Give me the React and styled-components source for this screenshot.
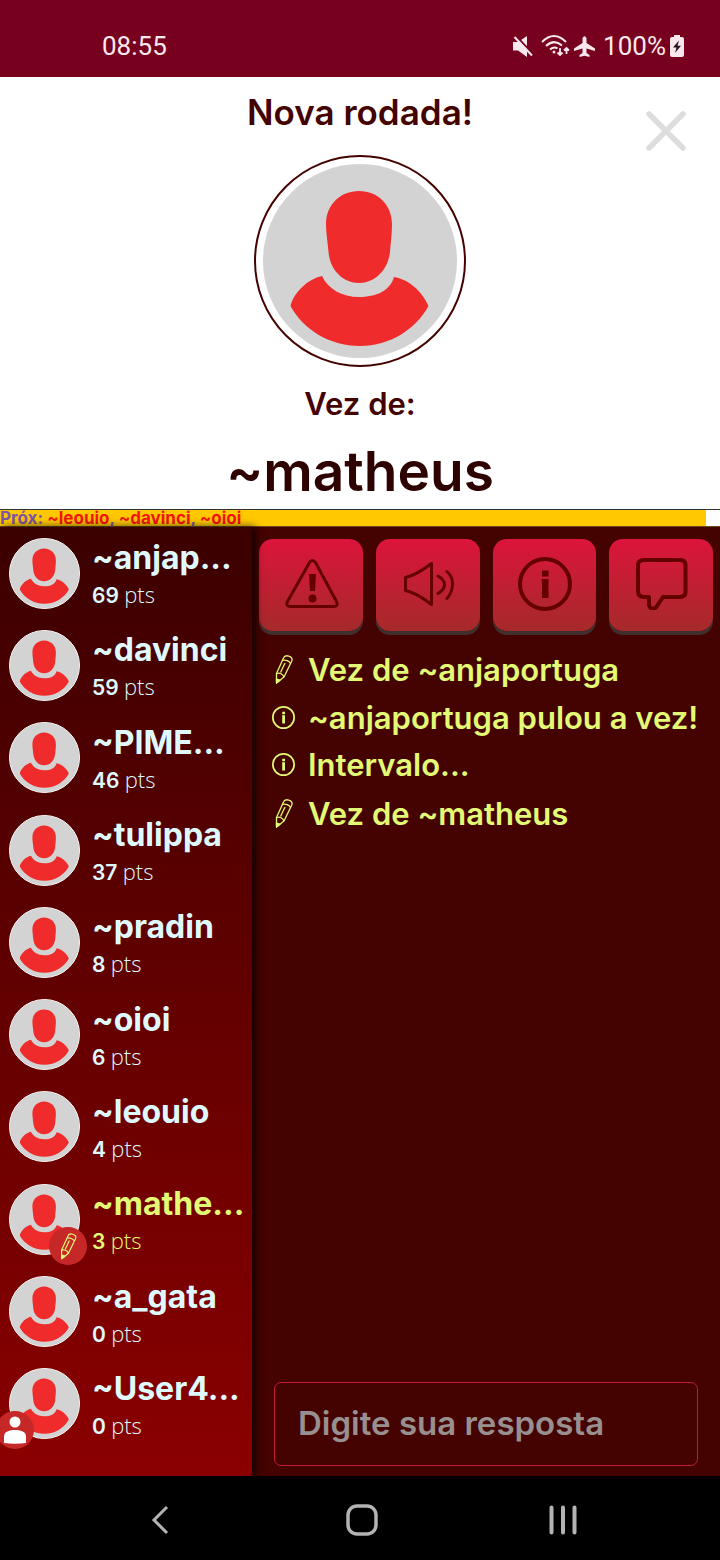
import React from 'react';
import styled, { createGlobalStyle } from 'styled-components';

const GlobalStyle = createGlobalStyle`
  * { box-sizing: border-box; }
  body { margin: 0; font-family: Inter, "Liberation Sans", sans-serif; font-weight: 600; background: #000; }
  ul, ol, h1, h2, p { margin: 0; padding: 0; list-style: none; font-weight: inherit; }
  button { border: 0; padding: 0; background: none; cursor: pointer; }
  svg { display: block; flex: none; }
`;

const Screen = styled.div`
  display: flex;
  flex-direction: column;
  min-height: 100vh;
`;

const StatusBar = styled.header`
  display: flex;
  justify-content: space-between;
  align-items: center;
  height: 77px;
  padding: 15px 36px 0 102px;
  background: #76001e;
  color: #f8e8ee;
  font: 400 26px/30px Roboto, sans-serif;
`;

const StatusIcons = styled.div`
  display: flex;
  align-items: center;
  gap: 4px;
`;

const TurnPanel = styled.section`
  position: relative;
  display: flex;
  flex-direction: column;
  align-items: center;
  height: 432px;
  padding-top: 13px;
  background: #fff;
  color: #440300;
`;

const Title = styled.h1`
  font-size: 35px;
  line-height: 44px;
`;

const TurnAvatar = styled.div`
  width: 212px;
  height: 212px;
  margin: 21px 0 17px;
  padding: 7px;
  border: 2px solid #440300;
  border-radius: 50%;
`;

const TurnLabel = styled.p`
  font-size: 31px;
  line-height: 40px;
`;

const TurnName = styled.h2`
  margin-top: 15px;
  color: #2e0200;
  font-size: 55px;
  line-height: 64px;
`;

const CloseButton = styled.button`
  position: absolute;
  top: 32px;
  right: 32px;
`;

const QueueBar = styled.div`
  display: flex;
  height: 18px;
  border-top: 1px solid #333;
  border-bottom: 1px solid #6b4a14;
  background: #fff;
`;

const QueueFill = styled.div`
  width: 98%;
  background: #ffc800;
  color: #7f55a5;
  font-size: 17px;
  font-weight: 700;
  line-height: 16px;
  white-space: nowrap;
`;

const QueueName = styled.span`
  color: #f5150c;
`;

const Game = styled.main`
  flex: 1;
  display: flex;
  background: #440300;
`;

const Sidebar = styled.aside`
  position: relative;
  width: 35%;
  padding-bottom: 26px;
  display: flex;
  background: linear-gradient(#3b0000, #8b0000);
  box-shadow: 3px 0 8px rgba(0, 0, 0, 0.8);
`;

const PlayerList = styled.ul`
  flex: 1;
  min-width: 0;
  display: grid;
  grid-auto-rows: 1fr;
`;

const Player = styled.li`
  display: flex;
  align-items: center;
  gap: 12px;
  padding-left: 9px;
  color: ${(p) => (p.$active ? '#e2fa74' : '#dffaff')};
`;

const PlayerAvatar = styled.div`
  position: relative;
  flex: none;
  width: 71px;
  height: 71px;
  border: 1px solid #fff;
  border-radius: 50%;
  background: #d3d3d3;
`;

const Badge = styled.span`
  position: absolute;
  bottom: -11px;
  ${(p) => p.$side}: ${(p) => (p.$side === 'left' ? '-14px' : '-8px')};
  display: flex;
  align-items: center;
  justify-content: center;
  width: 38px;
  height: 38px;
  border-radius: 50%;
  background: #c62828;
`;

const PlayerText = styled.div`
  min-width: 0;
  padding-top: 4px;
`;

const PlayerName = styled.p`
  font-size: 32px;
  font-weight: 700;
  line-height: 40px;
  white-space: nowrap;
`;

const PlayerPoints = styled.p`
  font-size: 21px;
  line-height: 32px;
`;

const Unit = styled.span`
  font-family: "Open Sans", "Noto Sans", sans-serif;
  font-size: 22px;
  font-weight: 300;
`;

const Room = styled.section`
  flex: 1;
  min-width: 0;
  display: flex;
  flex-direction: column;
`;

const Toolbar = styled.div`
  display: grid;
  grid-template-columns: repeat(4, 1fr);
  gap: 13px;
  padding: 12px 7px 13px;
`;

const ToolButton = styled.button`
  display: flex;
  align-items: center;
  justify-content: center;
  height: 92px;
  padding: 0 0 2px 2px;
  border-radius: 14px;
  background: linear-gradient(#dc143c, #a52a2a);
  box-shadow: 0 4px 0 #402f2f;
  color: #650000;
`;

const Log = styled.ol`
  flex: 1;
  color: #e2fa74;
  font-size: 31px;
`;

const LogLine = styled.li`
  display: flex;
  align-items: center;
  gap: 13px;
  height: ${(p) => (p.$tall ? 50 : 47)}px;
  padding-left: 20px;
  white-space: nowrap;
`;

const AnswerForm = styled.form`
  padding: 0 22px 10px;
`;

const AnswerInput = styled.input`
  display: block;
  width: 100%;
  height: 84px;
  padding: 0 23px 2px;
  border: 1px solid #c41a3c;
  border-radius: 7px;
  background: transparent;
  color: #e2fa74;
  font: 600 33px/40px Inter, sans-serif;
  &::placeholder { color: #989090; opacity: 1; }
`;

const NavBar = styled.nav`
  display: flex;
  justify-content: space-between;
  align-items: center;
  height: 84px;
  padding: 4px 134px 0 137px;
  background: #000;
  color: #b3b3b3;
`;

const NavButton = styled.button`
  display: flex;
  align-items: center;
  justify-content: center;
  width: 46px;
  height: 48px;
  color: inherit;
`;

const Face = () => (
  <svg width="100%" height="100%" viewBox="0 0 194 194" aria-hidden="true">
    <circle cx="97" cy="97" r="97" fill="#d3d3d3" />
    <path
      fill="#ef2b2b"
      d="M96 27C77 27 63 41 63 60C63 70 65 80 65.500 88C67 106 80 119 96 119C112 119 125 106 127 88C127.500 80 129 70 129 60C129 41 115 27 96 27Z M59 112C45 115 31 128 27.500 142C40 165 66 182 97 182C127 182 153 165 165.500 142C159 127 145 115 131 113C127 127 113 133 96 133C79 133 65 125 59 112Z"
    />
  </svg>
);

const Pencil = ({ size = 30, width = 22 }) => (
  <svg width={width} height={size} viewBox="0 0 22 30" fill="none" stroke="currentColor" strokeWidth="1.300" strokeLinejoin="round" aria-hidden="true">
    <path d="M4 19.500L11 4C12.500 0 20.500 2 19.500 6.500L11.500 23L4 29Z" />
    <path d="M10 6.500C12.500 5.500 17 7 18 9.500M4 19.500C7 18.500 10.500 20 11.500 23M8 18.500L12.500 9" />
    <path d="M4 25L7.500 26.200L4 29Z" fill="currentColor" />
  </svg>
);

const Info = ({ size, stroke }) => (
  <svg width={size} height={size} viewBox="0 0 54 54" aria-hidden="true">
    <circle cx="27" cy="27" r="25" fill="none" stroke="currentColor" strokeWidth={stroke} />
    <path d="M24 13.500h6.500v6h-6.500zM23.500 22h7v19h-6.500v-15z" fill="currentColor" />
  </svg>
);

const Person = () => (
  <svg width="22" height="28" viewBox="0 0 22 28" fill="#fff" aria-hidden="true">
    <circle cx="11" cy="6" r="5.500" />
    <path d="M0 27V21C0 16 4 14 11 14S22 16 22 21V27Q11 28.500 0 27Z" />
  </svg>
);

const Warning = () => (
  <svg width="54" height="50" viewBox="0 0 54 50" fill="none" stroke="currentColor" strokeWidth="3" aria-hidden="true">
    <path d="M24.500 3.500Q27.500 -.5 30.500 3.500L51.500 42.500Q53.500 47.500 48.500 47.500H5.500Q.5 47.500 2.500 42.500Z" strokeLinejoin="round" />
    <path d="M24 15H31L30 32H25Z" fill="currentColor" stroke="none" />
    <circle cx="27.500" cy="39.500" r="4" fill="currentColor" stroke="none" />
  </svg>
);

const Speaker = () => (
  <svg width="50" height="44" viewBox="0 0 50 44" fill="none" stroke="currentColor" strokeWidth="3" strokeLinejoin="round" strokeLinecap="round" aria-hidden="true">
    <path d="M1.500 15.500C11 13.500 19 8 27.500 1.500V42.500C19 36 11 30.500 1.500 28.500Z" />
    <path d="M34 14Q41 18 40.500 23Q40 28 34 31.500M43 9.500Q49 15 48.500 23Q48 31 43 36.500" />
  </svg>
);

const Chat = () => (
  <svg width="52" height="52" viewBox="0 0 52 52" fill="none" stroke="currentColor" strokeWidth="4" strokeLinejoin="round" aria-hidden="true">
    <path d="M8 2H44Q49.500 2 49.500 7V34Q49.500 39 44 39H27L20 49.500Q14.500 53 13 47V39H8Q2 39 2 33V7Q2 2 8 2Z" />
  </svg>
);

const Muted = () => (
  <svg width="20" height="21" viewBox="0 0 20 21" aria-hidden="true">
    <path d="M0 6H5L14 0V21L5 14.500H0Z" fill="#f8e8ee" />
    <path d="M3 0L21 19" stroke="#76001e" strokeWidth="2" />
    <path d="M1.500 1L19 19.500" stroke="#f8e8ee" strokeWidth="2" />
  </svg>
);

const Wifi = () => (
  <svg width="29" height="22" viewBox="0 0 29 22" fill="none" stroke="#f8e8ee" strokeWidth="2" aria-hidden="true">
    <path d="M1 7Q13 -5 25 7M5 11Q13 3.500 21 10.500M9 14.500Q13 11 16.500 13.500" />
    <circle cx="13" cy="17" r="1.500" fill="#f8e8ee" stroke="none" />
    <path d="M19 13V20M16.500 17.500L19 20L21.500 17.500M25.500 19V13M23 15.500L25.500 13L28 15.500" strokeWidth="1.800" />
  </svg>
);

const Plane = () => (
  <svg width="21" height="21" viewBox="0 0 21 21" fill="#f8e8ee" aria-hidden="true">
    <path d="M8.500 2Q10.500 -1.500 12.500 2V7L21 12.500V15L12.500 12.500V17L15.500 19V21L10.500 19.700L5.500 21V19L8.500 17V12.500L0 15V12.500L8.500 7Z" />
  </svg>
);

const Battery = () => (
  <svg width="14" height="22" viewBox="0 0 14 22" aria-hidden="true">
    <path d="M4 0H10V2H12Q14 2 14 4V20Q14 22 12 22H2Q0 22 0 20V4Q0 2 2 2H4Z" fill="#f8e8ee" />
    <path d="M9 5.500L3 12.500H6.500L5 18L11 10.800H7.500Z" fill="#25151a" />
  </svg>
);

const players = [
  { name: '~anjap...', points: 69 },
  { name: '~davinci', points: 59 },
  { name: '~PIME...', points: 46 },
  { name: '~tulippa', points: 37 },
  { name: '~pradin', points: 8 },
  { name: '~oioi', points: 6 },
  { name: '~leouio', points: 4 },
  { name: '~mathe...', points: 3, drawing: true },
  { name: '~a_gata', points: 0 },
  { name: '~User4...', points: 0, self: true },
];

const messages = [
  { kind: 'turn', text: 'Vez de ~anjaportuga' },
  { kind: 'info', text: '~anjaportuga pulou a vez!' },
  { kind: 'info', text: 'Intervalo...' },
  { kind: 'turn', text: 'Vez de ~matheus' },
];

export default function App() {
  return (
    <Screen>
      <GlobalStyle />
      <StatusBar>
        <span>08:55</span>
        <StatusIcons>
          <Muted />
          <span />
          <Wifi />
          <Plane />
          <span />
          <span>100%</span>
          <Battery />
        </StatusIcons>
      </StatusBar>

      <TurnPanel>
        <Title>Nova rodada!</Title>
        <TurnAvatar><Face /></TurnAvatar>
        <TurnLabel>Vez de:</TurnLabel>
        <TurnName>~matheus</TurnName>
        <CloseButton type="button" aria-label="Fechar">
          <svg width="44" height="44" viewBox="0 0 44 44" stroke="#ddd" strokeWidth="5.500" strokeLinecap="round">
            <path d="M5 5L39 39M39 5L5 39" />
          </svg>
        </CloseButton>
      </TurnPanel>

      <QueueBar>
        <QueueFill>
          Próx: <QueueName>~leouio</QueueName>, <QueueName>~davinci</QueueName>, <QueueName>~oioi</QueueName>
        </QueueFill>
      </QueueBar>

      <Game>
        <Sidebar>
          <PlayerList>
            {players.map((p) => (
              <Player key={p.name} $active={p.drawing}>
                <PlayerAvatar>
                  <Face />
                  {p.drawing && <Badge $side="right"><Pencil size={28} width={20} /></Badge>}
                  {p.self && <Badge $side="left"><Person /></Badge>}
                </PlayerAvatar>
                <PlayerText>
                  <PlayerName>{p.name}</PlayerName>
                  <PlayerPoints>{p.points} <Unit>pts</Unit></PlayerPoints>
                </PlayerText>
              </Player>
            ))}
          </PlayerList>
        </Sidebar>

        <Room>
          <Toolbar>
            <ToolButton type="button" aria-label="Denunciar"><Warning /></ToolButton>
            <ToolButton type="button" aria-label="Som"><Speaker /></ToolButton>
            <ToolButton type="button" aria-label="Informações"><Info size={54} stroke={4} /></ToolButton>
            <ToolButton type="button" aria-label="Chat"><Chat /></ToolButton>
          </Toolbar>
          <Log>
            {messages.map((m) => (
              <LogLine key={m.text} $tall={m.kind === 'turn'}>
                {m.kind === 'turn' ? <Pencil width={23} /> : <Info size={23} stroke={4} />}
                <span>{m.text}</span>
              </LogLine>
            ))}
          </Log>
          <AnswerForm>
            <AnswerInput type="text" placeholder="Digite sua resposta" aria-label="Digite sua resposta" />
          </AnswerForm>
        </Room>
      </Game>

      <NavBar>
        <NavButton type="button" aria-label="Voltar">
          <svg width="18" height="30" viewBox="0 0 18 30" fill="none" stroke="currentColor" strokeWidth="3"><path d="M16 2L3 15L16 28" /></svg>
        </NavButton>
        <NavButton type="button" aria-label="Início">
          <svg width="32" height="32" viewBox="0 0 32 32" fill="none" stroke="currentColor" strokeWidth="3.500"><rect x="2" y="2" width="28" height="28" rx="9" /></svg>
        </NavButton>
        <NavButton type="button" aria-label="Recentes">
          <svg width="28" height="30" viewBox="0 0 28 30" stroke="currentColor" strokeWidth="4" strokeLinecap="round"><path d="M2.500 2.500V27.500M14 2.500V27.500M25.500 2.500V27.500" /></svg>
        </NavButton>
      </NavBar>
    </Screen>
  );
}
